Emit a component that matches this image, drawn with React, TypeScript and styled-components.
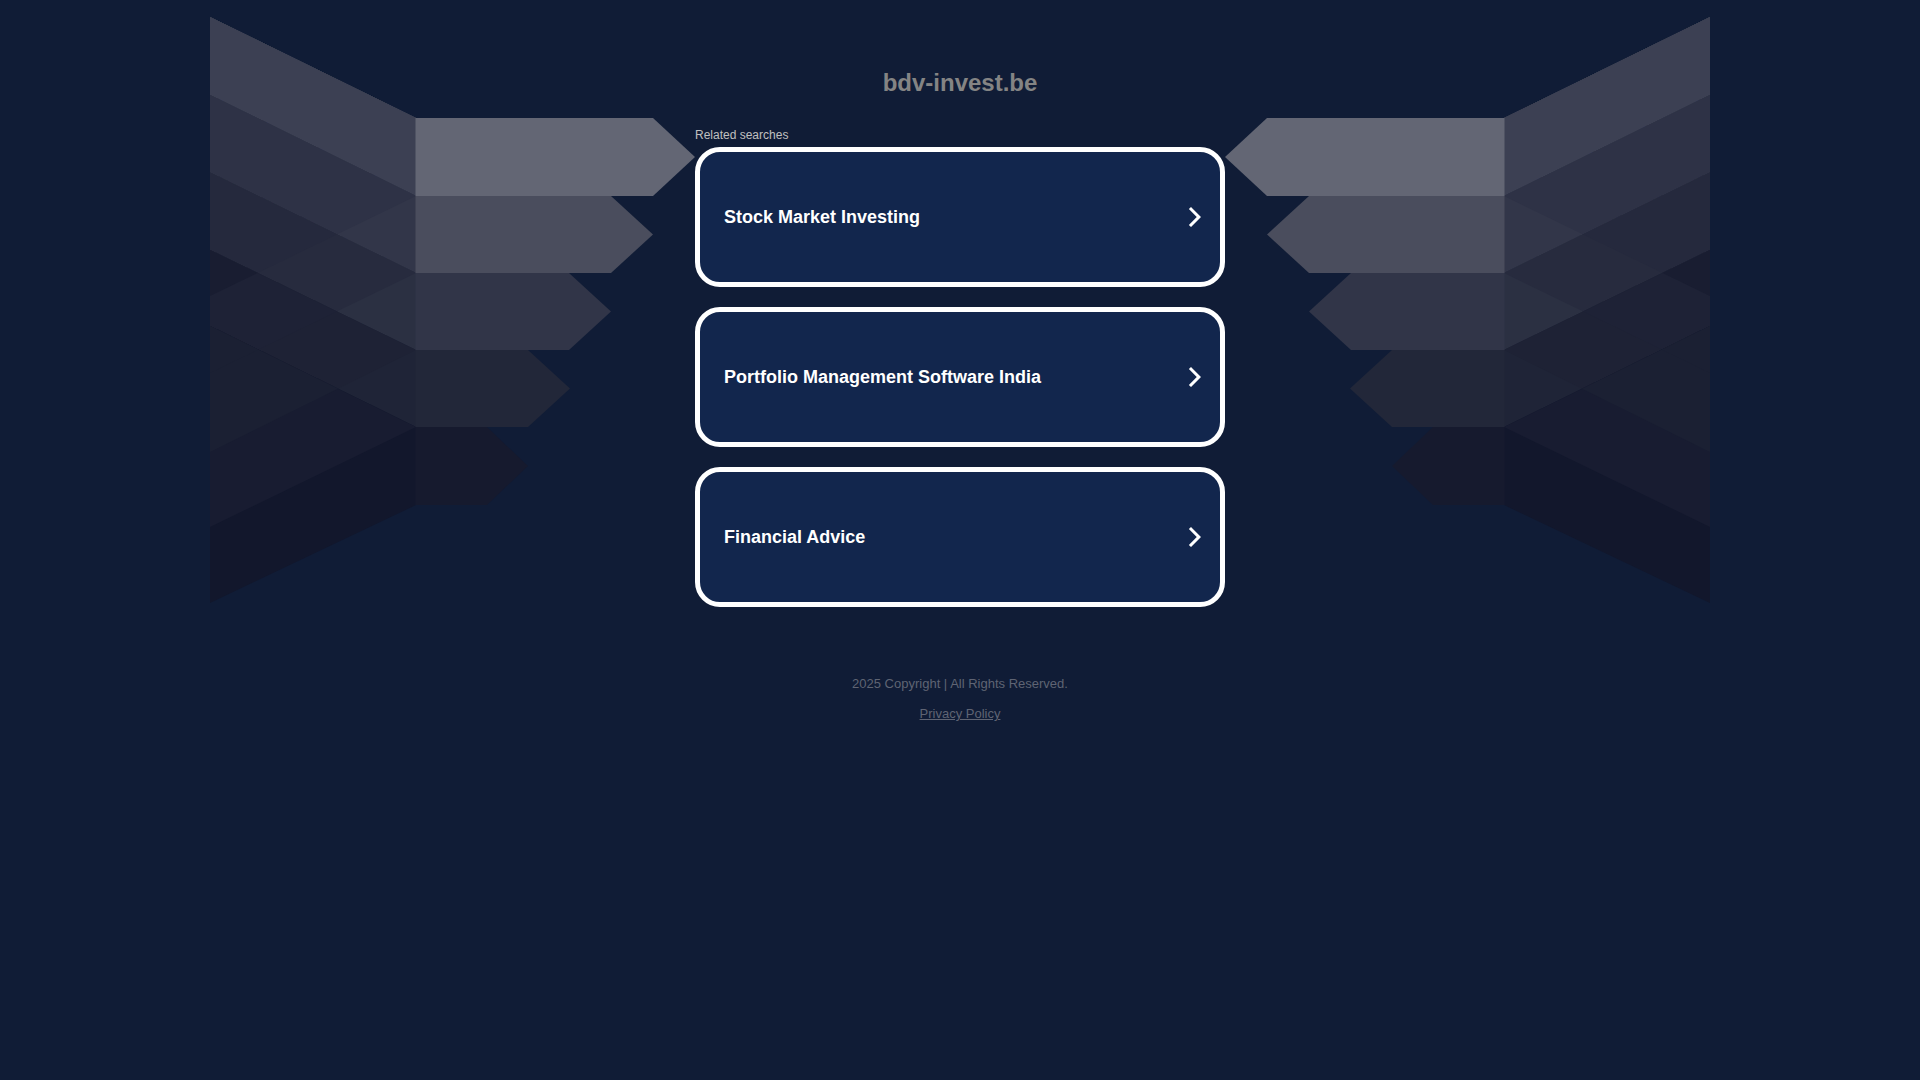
import React from 'react';
import styled, { createGlobalStyle } from 'styled-components';

const GlobalStyle = createGlobalStyle`
  *, *::before, *::after { box-sizing: border-box; }
  body {
    margin: 0;
    background: #101c36;
    font-family: "Liberation Sans", Arial, Helvetica, sans-serif;
  }
`;

const Page = styled.div`
  display: grid;
  grid-template-columns: minmax(0, 485px) minmax(300px, 530px) minmax(0, 485px);
  justify-content: center;
  align-items: start;
`;

const Wing = styled.svg<{ $mirrored?: boolean }>`
  display: block;
  width: 100%;
  height: auto;
  transform: ${(p) => (p.$mirrored ? 'scaleX(-1)' : 'none')};
`;

const Content = styled.main`
  display: flex;
  flex-direction: column;
  padding-top: 68px;
`;

const Title = styled.h1`
  margin: 0;
  color: #848484;
  font-size: 24px;
  line-height: 30px;
  text-align: center;
`;

const Related = styled.h2`
  margin: 30px 0 5px;
  color: #c0c0c0;
  font-size: 12px;
  font-weight: 400;
  line-height: 14px;
`;

const Results = styled.ul`
  display: flex;
  flex-direction: column;
  gap: 20px;
  margin: 0;
  padding: 0;
  list-style: none;
`;

const ResultLink = styled.a`
  display: flex;
  align-items: center;
  justify-content: space-between;
  min-height: 140px;
  padding: 0 13px 0 24px;
  border: 5px solid #fff;
  border-radius: 25px;
  background: #12264d;
  color: #fff;
  font-size: 18px;
  font-weight: 700;
  line-height: 24px;
  text-decoration: none;
`;

const Chevron = styled.svg`
  flex: none;
  width: 24px;
  height: 24px;
`;

const Footer = styled.footer`
  display: flex;
  flex-direction: column;
  align-items: center;
  gap: 14px;
  margin-top: 69px;
  color: #5f6473;
  font-size: 13px;
  line-height: 16px;
`;

const FooterLink = styled.a`
  color: inherit;
`;

const JOINT = 205.5;

/* Falling seams of the wing: height at the outer edge and at the joint. */
const falls = [
  [17, 118],
  [95, 196],
  [172.5, 273],
  [250, 350],
  [326, 427],
  [704, 704],
];

/* Rising seams that cross them. */
const rises = [
  [0, 0],
  [296, 196],
  [373, 273],
  [452, 350],
  [527, 427],
  [603, 505],
];

/* Fill of each falling band, split by the rising seams. */
const bandFills = [
  ['#3c4053', '#3c4053', '#3c4053', '#3c4053', '#3c4053'],
  ['#2e3246', '#323649', '#323649', '#323649', '#323649'],
  ['#25293d', '#272b3e', '#2b3042', '#2b3042', '#2b3042'],
  ['#191d31', '#1e2236', '#1e2235', '#1f2437', '#1f2437'],
  ['#1b2033', '#1b2033', '#1b2033', '#181c31', '#12172c'],
];

const arrows = [
  { top: 118, bottom: 196, shoulder: 443, tip: 485, fill: '#636674' },
  { top: 196, bottom: 273, shoulder: 401, tip: 443, fill: '#4a4d5d' },
  { top: 273, bottom: 350, shoulder: 359, tip: 401, fill: '#313548' },
  { top: 350, bottom: 427, shoulder: 318, tip: 360, fill: '#222739' },
  { top: 427, bottom: 505, shoulder: 277, tip: 318, fill: '#161a2e' },
];

function band(a: number[], b: number[]) {
  return `0,${a[0]} 206,${a[1]} 206,${b[1]} 0,${b[0]}`;
}

function WingArt({ id, mirrored }: { id: string; mirrored?: boolean }) {
  return (
    <Wing viewBox="0 0 485 610" $mirrored={mirrored} aria-hidden="true">
      <defs>
        {bandFills.map((_, k) => (
          <clipPath id={`${id}-${k}`} key={k}>
            <polygon points={band(falls[k], falls[k + 1])} />
          </clipPath>
        ))}
      </defs>
      {bandFills.map((fills, k) => (
        <g key={k} clipPath={`url(#${id}-${k})`}>
          {fills
            .map((fill, j) => <polygon key={j} points={band(rises[0], rises[j + 1])} fill={fill} />)
            .reverse()}
        </g>
      ))}
      {arrows.map(({ top, bottom, shoulder, tip, fill }) => (
        <polygon
          key={top}
          points={`${JOINT},${top} ${shoulder},${top} ${tip},${(top + bottom) / 2} ${shoulder},${bottom} ${JOINT},${bottom}`}
          fill={fill}
        />
      ))}
    </Wing>
  );
}

const searches = ['Stock Market Investing', 'Portfolio Management Software India', 'Financial Advice'];

export default function App() {
  return (
    <>
      <GlobalStyle />
      <Page>
        <WingArt id="left" />
        <Content>
          <Title>bdv-invest.be</Title>
          <Related>Related searches</Related>
          <Results>
            {searches.map((label) => (
              <li key={label}>
                <ResultLink href="#">
                  {label}
                  <Chevron viewBox="0 0 24 24" aria-hidden="true">
                    <path d="M5.88 4.12 13.76 12l-7.88 7.88L8 22l10-10L8 2z" fill="#fff" />
                  </Chevron>
                </ResultLink>
              </li>
            ))}
          </Results>
          <Footer>
            <span>2025 Copyright | All Rights Reserved.</span>
            <FooterLink href="#">Privacy Policy</FooterLink>
          </Footer>
        </Content>
        <WingArt id="right" mirrored />
      </Page>
    </>
  );
}
